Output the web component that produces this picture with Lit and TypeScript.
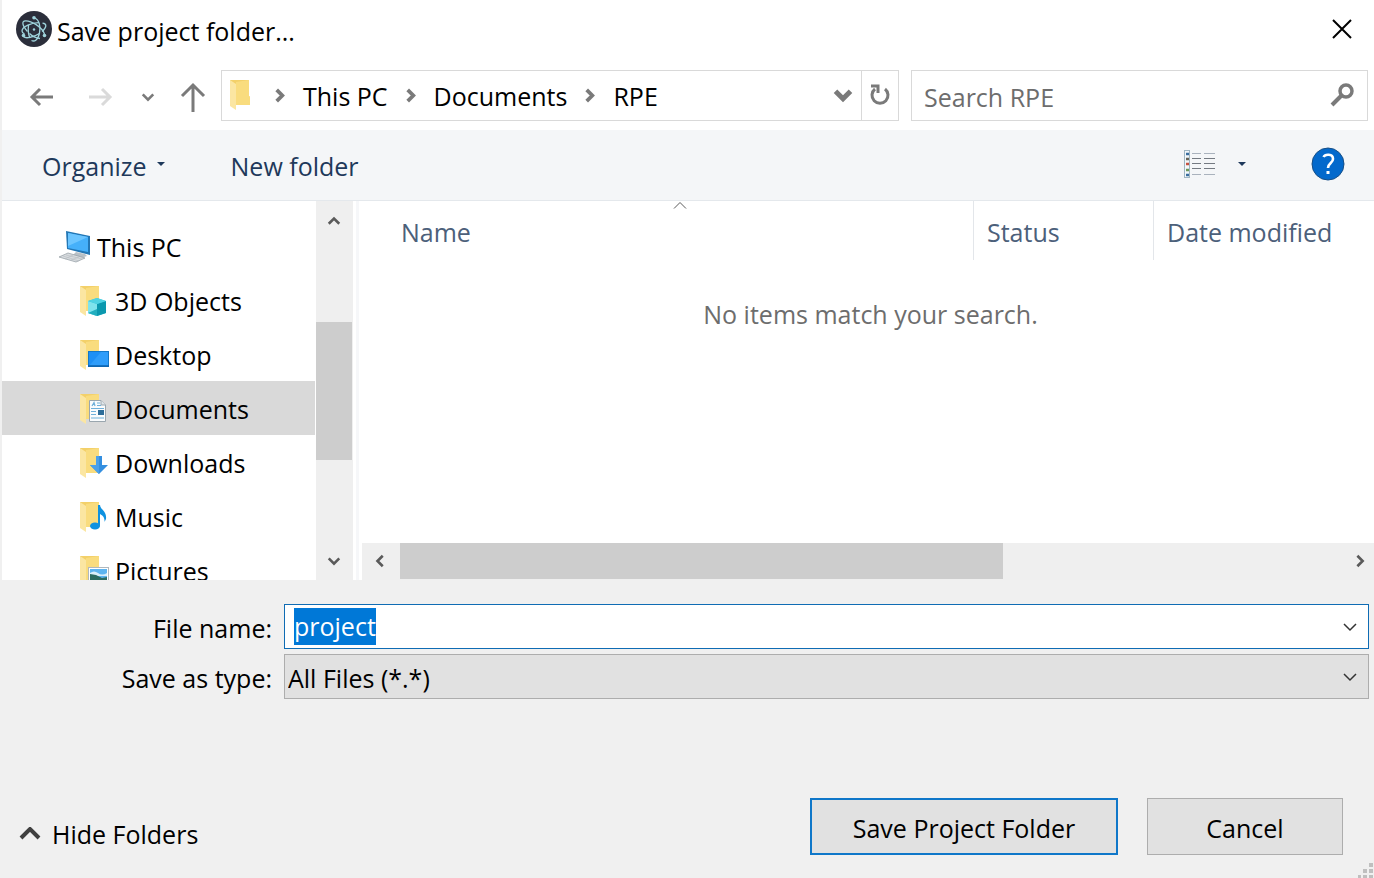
import { LitElement, html, css, svg, nothing } from "lit";
import { customElement, property, state, query } from "lit/decorators.js";
import { classMap } from "lit/directives/class-map.js";

type Direction = "up" | "down" | "left" | "right";

const chevronPaths: Record<Direction, string> = {
  up: "M2 9 8 3 14 9",
  down: "M2 4 8 10 14 4",
  left: "M10 1 4 7 10 13",
  right: "M5 1 11 7 5 13",
};

const chevron = (direction: Direction, size = 14, stroke = 3) => html`
  <svg width=${size} height=${size} viewBox="0 0 16 14" aria-hidden="true">
    <path d=${chevronPaths[direction]} fill="none" stroke="currentColor" stroke-width=${stroke} />
  </svg>
`;

const overlays: Record<string, unknown> = {
  plain: nothing,
  objects: svg`
    <path d="M8 16 17 13 26 16V28L17 31 8 28Z" fill="#35c3d8" />
    <path d="M8 16 17 19V31L8 28Z" fill="#7fe3ec" />
    <path d="M8 28 17 24V31Z" fill="#22aebf" />
    <path d="M17 19 26 16V28L17 31Z" fill="#0b98ae" />
    <path d="M8 16 17 13 26 16 17 19Z" fill="#4fd2e2" />
  `,
  desktop: svg`
    <rect x="8.500" y="12.500" width="20" height="15" fill="#1e90f5" stroke="#1478c8" />
    <path d="M9 27 21 13H28V27Z" fill="#2f9dfa" />
    <path d="M8 27H29" stroke="#0d62ad" stroke-width="1.500" />
  `,
  documents: svg`
    <path d="M9.500 7.500H21L25.500 12V28.500H9.500Z" fill="#fafcfd" stroke="#9aa6ae" />
    <path d="M21 7.500V12H25.500" fill="#dfe6ea" stroke="#9aa6ae" />
    <path d="M12 13 14 9.500 15 13M17 10H20M17 12.500H21M11 15.500H24M11 18.500H16M11 21.500H16M11 25H24" fill="none" stroke="#6fb0da" stroke-width="1.200" />
    <rect x="18" y="17" width="6" height="5" fill="#2e6d99" />
  `,
  downloads: svg`
    <path d="M16 9H22V18H28L19 27 10 18H16Z" fill="#348fe0" />
    <path d="M16 9H19V27L10 18H16Z" fill="#4aa0ea" />
  `,
  music: svg`
    <ellipse cx="15" cy="25" rx="5" ry="3.500" fill="#0f92e0" />
    <path d="M18 4H20C20.500 9 27 10 26 18L24.500 21C25 16 22 14 20 13V25H18Z" fill="#0f92e0" />
  `,
  pictures: svg`
    <rect x="8.500" y="12.500" width="20" height="15" fill="#fff" stroke="#b0b8be" />
    <rect x="10" y="14" width="17" height="12" fill="#5db4f0" />
    <path d="M10 18Q14 15 18 18T27 18V21H10Z" fill="#d9eefb" />
    <path d="M10 19 16 20 22 23 27 22V26H10Z" fill="#2c6b62" />
  `,
};

const folderIcon = (kind: string, width = 30) => html`
  <svg width=${width} height="32" viewBox="0 0 ${width} 32" aria-hidden="true">
    <path d="M0 1H19V17L20 18V26H0Z" fill="#f3d069" />
    <path d="M6 3 19 1V17L20 18V26H6Z" fill="#f9dc7e" />
    <path d="M0 1 6 5V31L0 27Z" fill="#fbe6a2" />
    ${overlays[kind]}
  </svg>
`;

const computerIcon = html`
  <svg width="32" height="32" viewBox="0 0 32 32" aria-hidden="true">
    <path d="M17 21 26 23 28 25 22 27 14 24Z" fill="#b8c0c6" />
    <path d="M7 0 31 5V24L8 18Z" fill="#2377b5" />
    <path d="M9 2 29 6V21L9 17Z" fill="#45b0fa" />
    <path d="M9 2 29 6 9 15Z" fill="#6cc5ff" />
    <path d="M0 26 9 22 26 27 17 31Z" fill="#d8dcdf" stroke="#9ba3a9" stroke-width="0.800" />
    <path d="M4 25 20 30M7 24 23 28M6 28 14 24M12 29 20 26" stroke="#b5bbbf" stroke-width="0.600" />
  </svg>
`;

const electronIcon = html`
  <svg width="36" height="36" viewBox="0 0 36 36" aria-hidden="true">
    <circle cx="18" cy="18" r="18" fill="#2b2e3b" />
    <g fill="none" stroke="#9fd3dc" stroke-width="1.300">
      <path d="M26.500 12.200C31 12.700 31 16 26 20.500M23.500 22.500C17 26.500 9.500 28 7.500 25.500" />
      <path d="M23 11.600C16 11.500 6 15.500 6 20C6 21.500 7 22.300 8.500 22.800" />
      <path d="M11.500 20.500C6 14 5.500 10 9.500 9.800C15 9.500 26 16 28.500 23" />
      <path d="M13.500 22.500C15.500 24.500 20 27 24 27.500" />
      <path d="M18.500 7C23 8.500 25 15 23.500 22C22 29 18.500 31 15.500 29.500" />
      <path d="M12.500 14C12 18.500 12.500 24 14 27" />
    </g>
    <g fill="#9fd3dc">
      <circle cx="18" cy="18.500" r="1.200" />
      <circle cx="18" cy="6.800" r="1.800" />
      <circle cx="7.500" cy="24.500" r="1.800" />
      <circle cx="28.500" cy="24.500" r="1.800" />
    </g>
  </svg>
`;

const baseStyles = css`
  * {
    box-sizing: border-box;
  }
  svg {
    display: block;
    flex: none;
  }
  button {
    display: flex;
    align-items: center;
    justify-content: center;
    margin: 0;
    padding: 0;
    border: 0;
    background: none;
    color: inherit;
    font: inherit;
    white-space: nowrap;
  }
`;

@customElement("scroll-track")
class ScrollTrack extends LitElement {
  @property({ type: Boolean, reflect: true }) horizontal = false;
  @property({ type: Number }) before = 0;
  @property({ type: Number }) thumb = 50;
  @property({ type: Number }) after = 50;

  static styles = [
    baseStyles,
    css`
      :host {
        display: flex;
        flex-direction: column;
        width: 37px;
        background: #efefef;
        color: #5a5a5a;
      }
      :host([horizontal]) {
        flex-direction: row;
        width: auto;
        height: 37px;
      }
      .step {
        flex: none;
        width: 36px;
        height: 38px;
      }
      .first {
        padding-top: 4px;
      }
      :host([horizontal]) .step {
        width: 38px;
        height: 36px;
        padding: 0;
      }
      :host([horizontal]) .last {
        width: 29px;
      }
      .rail {
        display: flex;
        flex-direction: inherit;
        flex: 1;
        min-height: 0;
      }
      .thumb {
        width: 36px;
        background: #cdcdcd;
      }
      :host([horizontal]) .thumb {
        width: auto;
        height: 36px;
      }
    `,
  ];

  render() {
    return html`
      <button class="step first" aria-label="Scroll back">${chevron(this.horizontal ? "left" : "up")}</button>
      <div class="rail">
        <div style="flex:${this.before}"></div>
        <div class="thumb" style="flex:${this.thumb}"></div>
        <div style="flex:${this.after}"></div>
      </div>
      <button class="step last" aria-label="Scroll forward">${chevron(this.horizontal ? "right" : "down")}</button>
    `;
  }
}

@customElement("app-root")
class AppRoot extends LitElement {
  @state() private selected = "Documents";
  @query(".filename") private filename!: HTMLInputElement;

  private places = [
    { name: "3D Objects", kind: "objects" },
    { name: "Desktop", kind: "desktop" },
    { name: "Documents", kind: "documents" },
    { name: "Downloads", kind: "downloads" },
    { name: "Music", kind: "music" },
    { name: "Pictures", kind: "pictures" },
  ];

  private path = ["This PC", "Documents", "RPE"];

  static styles = [
    baseStyles,
    css`
      :host {
        display: flex;
        flex-direction: column;
        position: relative;
        height: 100vh;
        overflow: hidden;
        border-left: 2px solid #f0f0f0;
        background: #f0f0f0;
        color: #000;
        font-family: "Open Sans", "Noto Sans", sans-serif;
        font-size: 25px;
        line-height: 36px;
      }
      .titlebar {
        display: flex;
        align-items: center;
        gap: 5px;
        height: 62px;
        padding: 0 20px 4px 14px;
        background: #fff;
      }
      .title {
        flex: 1;
        margin: 0;
        padding-top: 4px;
        font-size: inherit;
        font-weight: 400;
      }
      .navbar {
        display: flex;
        align-items: center;
        height: 68px;
        padding: 0 6px 2px 27px;
        background: #fff;
        color: #7a7a7a;
      }
      .history {
        display: flex;
        align-items: center;
        gap: 32px;
        width: 192px;
        padding-top: 4px;
      }
      .history .recent {
        margin-left: -4px;
      }
      .history .up {
        margin-left: -7px;
      }
      .disabled {
        color: #dadada;
      }
      .address {
        display: flex;
        flex: 1;
        height: 51px;
        border: 1px solid #d9d9d9;
      }
      .crumbs {
        display: flex;
        flex: 1;
        align-items: center;
        margin: 0;
        padding: 0 0 0 8px;
        list-style: none;
      }
      .crumbs li {
        display: flex;
        align-items: center;
      }
      .crumbs li svg {
        margin: 0 16px 0 15px;
      }
      .crumbs .root svg {
        margin: 0 6px 0 0;
      }
      .crumbs a {
        padding-top: 2px;
        color: #000;
        text-decoration: none;
      }
      .open {
        width: 36px;
      }
      .refresh {
        width: 37px;
        border-left: 1px solid #d9d9d9;
      }
      .search {
        display: flex;
        align-items: center;
        width: 457px;
        height: 51px;
        margin-left: 12px;
        padding: 0 13px 0 12px;
        border: 1px solid #d9d9d9;
      }
      input {
        flex: 1;
        min-width: 0;
        margin: 0;
        padding: 0;
        border: 0;
        outline: 0;
        background: none;
        color: #000;
        font: inherit;
      }
      .search input {
        padding-top: 4px;
      }
      input::placeholder {
        color: #6d6d6d;
        opacity: 1;
      }
      .toolbar {
        display: flex;
        align-items: center;
        height: 71px;
        padding: 0 29px 2px 40px;
        border-bottom: 1px solid #e4e8ec;
        background: #f4f6f8;
        color: #1e395b;
      }
      .organize {
        gap: 10px;
        padding-top: 4px;
      }
      .newfolder {
        margin: 0 auto 0 66px;
        padding-top: 4px;
      }
      .view {
        gap: 22px;
        margin-right: 65px;
      }
      .browser {
        display: flex;
        flex: 1;
        min-height: 0;
        background: #fff;
      }
      .tree {
        width: 313px;
        margin: 0 1px 0 0;
        padding: 18px 0 0;
        overflow: hidden;
        list-style: none;
      }
      .place {
        justify-content: flex-start;
        gap: 5px;
        width: 100%;
        height: 54px;
        padding: 2px 0 0 78px;
      }
      .place.top {
        gap: 6px;
        padding-left: 57px;
      }
      .place.current {
        background: #d9d9d9;
      }
      .files {
        display: flex;
        flex-direction: column;
        flex: 1;
        min-width: 0;
        margin-left: 3px;
        border-left: 3px solid #f6f7f9;
      }
      .content {
        flex: 1;
        min-height: 0;
        overflow: hidden;
      }
      table {
        width: 100%;
        border-spacing: 0;
        table-layout: fixed;
      }
      th {
        position: relative;
        height: 59px;
        padding: 2px 13px 0;
        border-right: 1px solid #e3e6ea;
        color: #4c607a;
        font-weight: 400;
        text-align: left;
        white-space: nowrap;
      }
      th:first-child {
        padding-left: 42px;
      }
      th:last-child {
        width: 220px;
        border-right: 0;
      }
      .status {
        width: 180px;
      }
      .sort {
        position: absolute;
        top: 0;
        right: 0;
        left: 28px;
        margin: 0 auto;
      }
      .empty {
        margin: 36px 0 0;
        padding-left: 8px;
        color: #6d6d6d;
        text-align: center;
      }
      .hscroll {
        margin-left: 3px;
      }
      .bottom {
        display: flex;
        flex-direction: column;
        justify-content: space-between;
        height: 298px;
        padding: 24px 5px 23px 0;
      }
      .fields {
        display: grid;
        grid-template-columns: 270px 1fr;
        gap: 5px 12px;
      }
      .fields label {
        padding-top: 6px;
        text-align: right;
      }
      .combo {
        display: grid;
        grid-template-columns: 1fr 36px;
        height: 45px;
        border: 1px solid #0f6cb4;
        background: #fff;
        color: #333;
      }
      .combo .filename {
        height: 37px;
        margin: 3px 0 0 9px;
        line-height: 37px;
      }
      .filename::selection {
        background: #0078d7;
        color: #fff;
      }
      .type {
        border-color: #adadad;
        background: #e1e1e1;
      }
      .type select {
        grid-area: 1 / 1 / 2 / 3;
        margin: 0;
        padding: 2px 36px 0 3px;
        border: 0;
        outline: 0;
        appearance: none;
        background: none;
        color: #000;
        font: inherit;
      }
      .type svg {
        grid-area: 1 / 2 / 2 / 3;
        place-self: center;
        pointer-events: none;
      }
      .actions {
        display: flex;
        align-items: center;
        gap: 29px;
        padding: 0 26px 0 17px;
      }
      .hide {
        gap: 11px;
        margin-right: auto;
        padding-top: 14px;
      }
      .push {
        width: 196px;
        height: 57px;
        padding-top: 2px;
        border: 1px solid #adadad;
        background: #e1e1e1;
      }
      .push.primary {
        width: 308px;
        border: 2px solid #0f77c9;
      }
      .grip {
        position: absolute;
        right: 0;
        bottom: 0;
      }
    `,
  ];

  firstUpdated() {
    this.filename.focus();
    this.filename.select();
  }

  private placeRow(place: { name: string; kind: string }) {
    const current = place.name === this.selected;
    return html`
      <li>
        <button
          class=${classMap({ place: true, current })}
          aria-current=${current ? "true" : "false"}
          @click=${() => (this.selected = place.name)}
        >
          ${folderIcon(place.kind)}<span>${place.name}</span>
        </button>
      </li>
    `;
  }

  render() {
    return html`
      <header class="titlebar">
        ${electronIcon}
        <h1 class="title">Save project folder...</h1>
        <button aria-label="Close">
          <svg width="24" height="24" viewBox="0 0 24 24">
            <path d="M3 3 21 21M21 3 3 21" stroke="#000" stroke-width="2" />
          </svg>
        </button>
      </header>

      <nav class="navbar">
        <div class="history">
          <button aria-label="Back">
            <svg width="26" height="20" viewBox="0 0 26 20">
              <path d="M24 10H3M11 2 3 10 11 18" fill="none" stroke="currentColor" stroke-width="3" />
            </svg>
          </button>
          <button class="disabled" aria-label="Forward" disabled>
            <svg width="26" height="20" viewBox="0 0 26 20">
              <path d="M2 10H23M15 2 23 10 15 18" fill="none" stroke="currentColor" stroke-width="3" />
            </svg>
          </button>
          <button class="recent" aria-label="Recent locations">${chevron("down", 14, 3)}</button>
          <button class="up" aria-label="Up">
            <svg width="26" height="30" viewBox="0 0 26 30">
              <path d="M13 30V3M2 14 13 3 24 14" fill="none" stroke="currentColor" stroke-width="3" />
            </svg>
          </button>
        </div>
        <div class="address">
          <ol class="crumbs">
            <li class="root">${folderIcon("plain", 21)}</li>
            ${this.path.map((part) => html`<li>${chevron("right", 15, 4)}<a href="#">${part}</a></li>`)}
          </ol>
          <button class="open" aria-label="Previous locations">${chevron("down", 20, 4)}</button>
          <button class="refresh" aria-label="Refresh">
            <svg width="22" height="24" viewBox="0 0 22 24">
              <path d="M16 6A8 8 0 1 1 6 6" fill="none" stroke="currentColor" stroke-width="3" />
              <path d="M2 3H9V10" fill="none" stroke="currentColor" stroke-width="3" />
            </svg>
          </button>
        </div>
        <div class="search">
          <input type="search" placeholder="Search RPE" aria-label="Search RPE" />
          <svg width="24" height="24" viewBox="0 0 24 24" aria-hidden="true">
            <circle cx="16" cy="8" r="6" fill="none" stroke="currentColor" stroke-width="3.500" />
            <path d="M12 12 2 22" stroke="currentColor" stroke-width="4" />
          </svg>
        </div>
      </nav>

      <div class="toolbar">
        <button class="organize">
          Organize
          <svg width="8" height="12" viewBox="0 0 8 12"><path d="M0 2H8L4 6Z" fill="currentColor" /></svg>
        </button>
        <button class="newfolder">New folder</button>
        <button class="view" aria-label="Change your view">
          <svg width="32" height="28" viewBox="0 0 32 28">
            <rect x="0.500" y="0.500" width="5" height="27" fill="#f3f8fb" stroke="#9fb5c2" />
            <path d="M2 4H5M2 25H5" stroke="#3b6ea0" stroke-width="2.500" />
            <path d="M2 9H5" stroke="#67655a" stroke-width="2.500" />
            <path d="M2 14H5" stroke="#c65343" stroke-width="2.500" />
            <path d="M2 20H5" stroke="#6e9a5c" stroke-width="2.500" />
            <path d="M8 3.500H17M20 3.500H31M8 24.500H17M20 24.500H31" stroke="#a9b2bd" />
            <path d="M8 8.500H17M20 8.500H31M8 13.500H17M20 13.500H31M8 18.500H17M20 18.500H31" stroke="#747a82" />
          </svg>
          <svg width="8" height="6" viewBox="0 0 8 6"><path d="M0 1H8L4 5Z" fill="currentColor" /></svg>
        </button>
        <button aria-label="Help">
          <svg width="34" height="34" viewBox="0 0 34 34">
            <circle cx="17" cy="17" r="16" fill="#0369cc" stroke="#174f87" />
            <path d="M12.500 10C14 7 22 6.500 22 12C22 16 17 16 17 21" fill="none" stroke="#fff" stroke-width="2.600" />
            <rect x="15.500" y="24" width="3" height="3" fill="#fff" />
          </svg>
        </button>
      </div>

      <main class="browser">
        <ul class="tree">
          <li><button class="place top">${computerIcon}<span>This PC</span></button></li>
          ${this.places.map((place) => this.placeRow(place))}
        </ul>
        <scroll-track .before=${83} .thumb=${138} .after=${82}></scroll-track>
        <section class="files">
          <div class="content">
            <table>
              <thead>
                <tr>
                  <th aria-sort="ascending">
                    Name
                    <svg class="sort" width="14" height="9" viewBox="0 0 14 9">
                      <path d="M1 7.500 7 1.500 13 7.500" fill="none" stroke="#5a5a5a" />
                    </svg>
                  </th>
                  <th class="status">Status</th>
                  <th>Date modified</th>
                </tr>
              </thead>
            </table>
            <p class="empty">No items match your search.</p>
          </div>
          <scroll-track class="hscroll" horizontal .before=${0} .thumb=${603} .after=${342}></scroll-track>
        </section>
      </main>

      <footer class="bottom">
        <div class="fields">
          <label for="filename">File name:</label>
          <div class="combo">
            <input class="filename" id="filename" value="project" spellcheck="false" />
            <button aria-label="Previous file names">${chevron("down", 16, 1.5)}</button>
          </div>
          <label for="filetype">Save as type:</label>
          <div class="combo type">
            <select id="filetype">
              <option>All Files (*.*)</option>
            </select>
            ${chevron("down", 16, 1.5)}
          </div>
        </div>
        <div class="actions">
          <button class="hide">
            <svg width="22" height="14" viewBox="0 0 22 14"><path d="M2 11 11 2 20 11" fill="none" stroke="#404040" stroke-width="4" /></svg>
            Hide Folders
          </button>
          <button class="push primary">Save Project Folder</button>
          <button class="push">Cancel</button>
        </div>
      </footer>
      <svg class="grip" width="16" height="16" viewBox="0 0 16 16" aria-hidden="true">
        <path d="M11 1H15V5H11ZM5 7H9V11H5ZM11 7H15V11H11ZM0 13H3V16H0ZM5 13H9V16H5ZM11 13H15V16H11Z" fill="#bfbfbf" />
      </svg>
    `;
  }
}
